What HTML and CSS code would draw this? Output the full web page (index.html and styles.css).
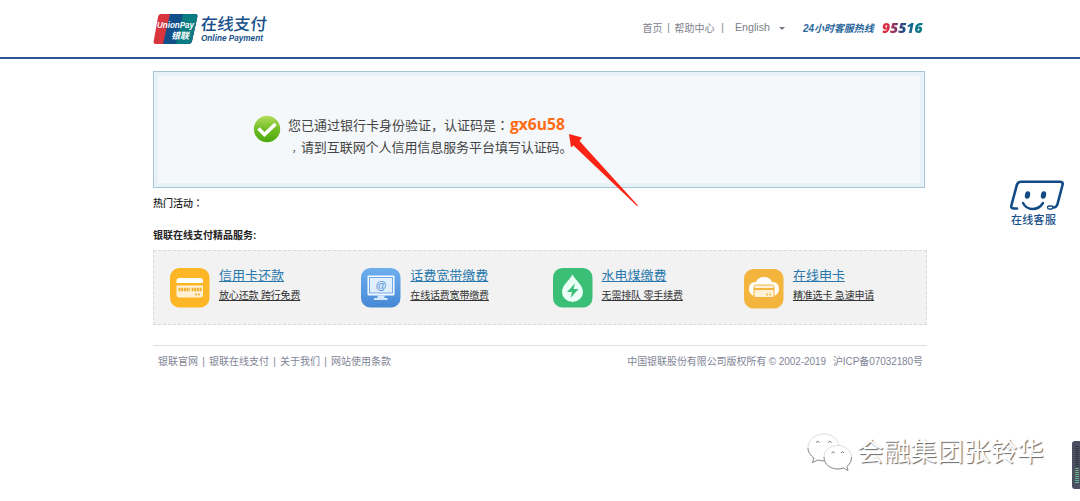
FILE: index.html
```html
<!DOCTYPE html>
<html lang="zh-CN">
<head>
    <meta charset="UTF-8">
    <meta name="viewport" content="width=device-width, initial-scale=1.0">
    <title>银联在线支付</title>
    <link rel="stylesheet" href="styles.css">
</head>
<body>

    <header class="header">
        <div class="header-inner">
            <div class="logo">
                <svg class="logo-mark" width="45" height="30" viewBox="0 0 45 30">
                    <defs>
                        <clipPath id="card"><path d="M8 0H42Q45 0 44.300 3L39 27Q38.300 30 35 30H3Q0 30 .7 27L5 3Q5.700 0 8 0Z"/></clipPath>
                    </defs>
                    <g clip-path="url(#card)">
                        <rect width="45" height="30" fill="#d8353f"/>
                        <path d="M17 0H45V30H10Z" fill="#12508c"/>
                        <path d="M30 0H45V30H23Z" fill="#087b83"/>
                    </g>
                    <text class="mark-en" x="4" y="14" textLength="37" lengthAdjust="spacingAndGlyphs">UnionPay</text>
                    <text class="mark-cn" x="18" y="24.500" textLength="18">银联</text>
                </svg>
                <div class="logo-text">
                    <span class="logo-cn">在线支付</span>
                    <span class="logo-en">Online Payment</span>
                </div>
            </div>
            <div class="top-nav">
                <a>首页</a><i>|</i><a>帮助中心</a><i class="sep-last">|</i><a class="lang">English</a>
                <span class="caret"></span>
                <span class="hotline">24小时客服热线</span>
                <span class="hotline-number">95516</span>
            </div>
        </div>
    </header>

    <div class="container">
        <div class="notice">
            <svg class="ok" width="28" height="28" viewBox="0 0 28 28">
                <defs>
                    <linearGradient id="green" x1="0" y1="0" x2="0" y2="1">
                        <stop offset="0" stop-color="#b4dc5c"/>
                        <stop offset=".5" stop-color="#72bd25"/>
                        <stop offset="1" stop-color="#4ba90c"/>
                    </linearGradient>
                </defs>
                <circle cx="14" cy="14" r="13.200" fill="url(#green)"/>
                <path d="M5.500 13.500L11.500 19.500L22.500 9" fill="none" stroke="#fff" stroke-width="3.600"/>
            </svg>
            <div class="notice-text">
                <p>您已通过银行卡身份验证，认证码是<span class="colon" lang="zh-TW">：</span><strong>gx6u58</strong></p>
                <p class="second"><span class="comma">，</span>请到互联网个人信用信息服务平台填写认证码。</p>
            </div>
            <svg class="arrow" width="72" height="74" viewBox="0 0 72 74">
                <path d="M1 2L14 5.500L11.500 9L70 73.500L69 74L5.500 13.500L3 15.500Z" fill="#fb2314"/>
            </svg>
        </div>

        <h3 class="hot">热门活动<span class="colon" lang="zh-TW">：</span></h3>
        <h3 class="service-title">银联在线支付精品服务:</h3>

        <div class="services">
            <div class="service">
                <svg width="40" height="40" viewBox="0 0 40 40">
                    <rect width="39.500" height="39.500" rx="9.500" fill="#fdb626"/>
                    <path d="M6.500 13Q6.500 10 9.500 10H30Q33 10 33 13V15H6.500Z" fill="#fff"/>
                    <path d="M6.500 17.500H33V27Q33 29.500 30 29.500H9.500Q6.500 29.500 6.500 27Z" fill="#fff1d2"/>
                    <path d="M8.500 21.500H20M21.500 21.500H32" stroke="#f2ad2f" stroke-width="3.500" stroke-dasharray="2 .7"/>
                    <path d="M25 26.500H30" stroke="#f2ad2f" stroke-width="1.500" stroke-dasharray="2 1"/>
                </svg>
                <div class="service-text"><a>信用卡还款</a><a class="sub">放心还款 跨行免费</a></div>
            </div>
            <div class="service">
                <svg width="40" height="40" viewBox="0 0 40 40">
                    <defs>
                        <linearGradient id="blue" x1="0" y1="0" x2="0" y2="1">
                            <stop offset="0" stop-color="#6eaff0"/>
                            <stop offset="1" stop-color="#4688d6"/>
                        </linearGradient>
                    </defs>
                    <rect width="39.500" height="39.500" rx="9.500" fill="url(#blue)"/>
                    <rect x="6.500" y="7.500" width="27" height="20" rx="1" fill="#f5faff"/>
                    <rect x="8.500" y="9.500" width="23" height="15.500" fill="#e0eefd" stroke="#6ea9e8"/>
                    <path d="M16.500 27.500H23.500V30H26.500V32H13V30H16.500Z" fill="#d5e8fb"/>
                    <text class="at" x="20" y="21" text-anchor="middle">@</text>
                </svg>
                <div class="service-text"><a>话费宽带缴费</a><a class="sub">在线话费宽带缴费</a></div>
            </div>
            <div class="service">
                <svg width="40" height="40" viewBox="0 0 40 40">
                    <rect width="39.500" height="39.500" rx="9.500" fill="#3bbf77"/>
                    <path d="M19.500 6.500C22 12 30 17 30 24A10.500 10 0 0 1 9 24C9 17 17 12 19.500 6.500Z" fill="#eafff5"/>
                    <path d="M22 15.500L14 24H19L17.500 30L25.500 21H20.500Z" fill="#3bbf77"/>
                </svg>
                <div class="service-text"><a>水电煤缴费</a><a class="sub">无需排队 零手续费</a></div>
            </div>
            <div class="service">
                <svg class="lower" width="40" height="40" viewBox="0 0 40 40">
                    <rect width="39.500" height="39.500" rx="9.500" fill="#f3b53e"/>
                    <path d="M10 27Q5 25 5 20Q5 13 12 13Q14 8 20 8T28 13Q35 13 35 20Q35 25 30 27Z" fill="#fff"/>
                    <rect x="10" y="16" width="20" height="12" rx="1.500" fill="#fff1d5"/>
                    <path d="M10 28V17.500Q10 16 11.500 16H28.500Q30 16 30 17.500V28" fill="none" stroke="#f3b53e"/>
                    <path d="M10 20H30" stroke="#f3b53e" stroke-width="2"/>
                    <path d="M22.500 25.500H28" stroke="#f3b53e" stroke-width="2" stroke-dasharray="1.500 1.500"/>
                </svg>
                <div class="service-text"><a>在线申卡</a><a class="sub">精准选卡 急速申请</a></div>
            </div>
        </div>

        <footer class="footer">
            <div><a>银联官网</a><i>|</i><a>银联在线支付</a><i>|</i><a>关于我们</a><i>|</i><a>网站使用条款</a></div>
            <div class="copyright"><span>中国银联股份有限公司版权所有 © 2002-2019</span><span>沪ICP备07032180号</span></div>
        </footer>
    </div>

    <!-- 在线客服 -->
    <div class="chat">
        <svg width="56" height="34" viewBox="0 0 56 34">
            <g fill="none" stroke="#124a86" stroke-width="2.600" stroke-linecap="round">
                <path d="M8 29.500H5Q1.500 29.500 2.500 26L8 5.500Q9 2.800 12 2.800H51Q54.500 2.800 53.500 6L48.500 25Q47.500 28.500 44.500 28.500"/>
                <path d="M14 24C18 32 29 32 34 24" stroke-width="2.400"/>
                <rect x="38.500" y="27" width="5.500" height="3" rx="1.500" stroke-width="1.300"/>
            </g>
            <ellipse cx="18.500" cy="16" rx="2.600" ry="3.800" fill="#124a86" transform="rotate(12 18.500 16)"/>
            <ellipse cx="34.500" cy="16" rx="2.600" ry="3.800" fill="#124a86" transform="rotate(12 34.500 16)"/>
        </svg>
        <span>在线客服</span>
    </div>

    <div class="watermark">
        <svg width="46" height="40" viewBox="0 0 46 40">
            <g fill="#fff" stroke="#ccc" stroke-width=".7">
                <path d="M17 1C8 1 1 7 1 14.500C1 19 3.500 22.500 7 25L5.500 29.500L11 27Q16 28.500 20 27.500C28 27 33 21 32 13C31 6 25 1 17 1Z"/>
                <path d="M31 12.500C23 12.500 17 17.500 17 24C17 31 23 36 31 36Q34 36 36.500 35L41 37.500L40 33.500C43 31 44.500 28 44.500 24C44.500 17.500 38 12.500 31 12.500Z"/>
            </g>
            <path d="M1 15C1 19 3.500 22.500 7 25L5.500 29.500L11 27Q14 28 17 27.800M17 24C17 31 23 36 31 36Q34 36 36.500 35L41 37.500L40 33.500C43 31 44.500 28 44.500 24" fill="none" stroke="#888" stroke-width=".9"/>
            <path d="M9 9.500q1.800-2.500 3.600 0M21 9.500q1.800-2.500 3.600 0M24.500 20q1.600-2.500 3.200 0M34 20q1.600-2.500 3.200 0" fill="none" stroke="#777"/>
        </svg>
        <span>会融集团张铃华</span>
    </div>

    <div class="meter"><span></span></div>

</body>
</html>
```
FILE: styles.css
```css
body {
    margin: 0;
    height: 501px;
    position: relative;
    overflow: hidden;
    background-color: #fff;
    font-family: "Liberation Sans", "Noto Sans CJK SC", sans-serif;
    font-size: 10px;
    color: #333;
}

i {
    font-style: normal;
}

.header {
    height: 57px;
    border-bottom: 2px solid #2f5591;
}

.header-inner {
    display: flex;
    justify-content: space-between;
    width: 770px;
    margin-left: 153px;
}

.logo {
    display: flex;
    padding-top: 14px;
}

.mark-en {
    font: italic bold 8.5px "Liberation Sans", sans-serif;
    fill: #fff;
}

.mark-cn {
    font: italic bold 9px "Noto Sans CJK SC", sans-serif;
    fill: #fff;
}

.logo-text {
    display: flex;
    flex-direction: column;
    margin-left: 3px;
    color: #17508a;
    white-space: nowrap;
}

.logo-cn {
    font-size: 16.5px;
    font-weight: 500;
    line-height: 20px;
    transform: skewX(-6deg);
}

.logo-en {
    font-size: 8.2px;
    font-weight: bold;
    font-style: italic;
    line-height: 10px;
}

.top-nav {
    display: flex;
    align-items: center;
    height: 18px;
    padding-top: 18px;
    color: #7d808c;
    white-space: nowrap;
}

.top-nav i {
    width: 12px;
    text-align: center;
}

.top-nav .sep-last {
    width: 16px;
}

.top-nav .lang {
    margin-left: 4.5px;
    font-size: 10.7px;
}

.caret {
    margin: 2px 18px 0 9px;
    border: 3.5px solid transparent;
    border-top-color: #747986;
    border-bottom: 0;
}

.hotline {
    width: 71px;
    font-size: 10px;
    font-weight: bold;
    font-style: italic;
    letter-spacing: -0.05px;
    color: #2b689b;
}

.hotline-number {
    width: 41px;
    margin-left: 8px;
    font: italic 800 14px "Open Sans", sans-serif;
    background: linear-gradient(90deg, #e3293d 12%, #77386c 35%, #174f8d 55%, #087f88 95%);
    background-clip: text;
    -webkit-background-clip: text;
    color: transparent;
}

.container {
    width: 774px;
    margin-left: 153px;
}

.notice {
    position: relative;
    display: flex;
    box-sizing: border-box;
    width: 772px;
    height: 117px;
    margin-top: 12px;
    padding: 43px 0 0 99px;
    border: 1px solid #a8c5d9;
    box-shadow: inset 0 0 0 4px #e6f2f8;
    background-color: #f4f8fb;
}

.notice-text {
    margin-left: 7px;
    font-size: 13px;
    color: #444;
}

.notice p {
    margin: 0;
    height: 23px;
    line-height: 20px;
    white-space: nowrap;
}

.notice .second {
    letter-spacing: -0.07px;
}

.notice strong {
    margin-left: 1px;
    font-family: "Open Sans", sans-serif;
    font-size: 15.6px;
    line-height: 18px;
    color: #ff6a13;
}

.colon {
    font-family: "Noto Sans CJK TC", sans-serif;
}

.comma {
    margin-left: 4px;
    font-size: 9px;
}

.arrow {
    position: absolute;
    left: 414px;
    top: 60px;
}

h3 {
    margin: 0;
    font-size: 10px;
    line-height: 16px;
    color: #222;
}

.hot {
    margin-top: 7px;
    font-weight: 500;
}

.service-title {
    margin-top: 16px;
}

.services {
    display: grid;
    grid-template-columns: repeat(4, 191.3px);
    box-sizing: border-box;
    height: 75px;
    margin-top: 6px;
    padding: 17px 0 0 16px;
    overflow: hidden;
    border: 1px dashed #d9d9d9;
    background-color: #f2f2f2;
}

.service {
    display: flex;
}

.lower {
    margin-top: 1px;
}

.at {
    font: bold 11px "Liberation Sans", sans-serif;
    fill: #5793d4;
}

.service-text {
    display: flex;
    flex-direction: column;
    align-items: flex-start;
    margin-left: 9px;
    font-size: 13px;
    line-height: 16px;
    color: #2878ad;
    white-space: nowrap;
}

.service-text a {
    text-decoration: underline;
}

.service-text .sub {
    margin-top: 4px;
    font-size: 10px;
    letter-spacing: -0.17px;
    color: #333;
}

.footer {
    display: flex;
    justify-content: space-between;
    margin-top: 20px;
    padding: 8px 4px 0 5px;
    border-top: 1px solid #ddd;
    line-height: 15px;
    color: #7f8596;
    white-space: nowrap;
}

.footer i {
    display: inline-block;
    width: 11px;
    text-align: center;
}

.copyright {
    letter-spacing: -0.08px;
}

.copyright span + span {
    margin-left: 7px;
}

.chat {
    position: absolute;
    left: 1009px;
    top: 179px;
    display: flex;
    flex-direction: column;
    font-size: 11px;
    font-weight: 500;
    line-height: 14px;
    color: #17508a;
}

.chat span {
    margin-left: 2px;
    letter-spacing: 0.3px;
}

.watermark {
    position: absolute;
    left: 807px;
    top: 433px;
    display: flex;
    font-size: 26.7px;
    line-height: 39px;
    color: #fff;
    text-shadow: 1px 1px 1px #666;
    white-space: nowrap;
}

.watermark span {
    margin-left: 4px;
}

.meter {
    position: absolute;
    left: 1072px;
    top: 441px;
    width: 10px;
    height: 48px;
    border-radius: 3px;
    background-color: #4b5061;
}

.meter span {
    display: block;
    width: 4px;
    height: 38px;
    margin: 5px 0 0 3px;
    background: repeating-linear-gradient(transparent 0 1px, #4b5061 1px 2px), linear-gradient(#343948 55%, #79a67b 55%, #54b8a0);
}
```
